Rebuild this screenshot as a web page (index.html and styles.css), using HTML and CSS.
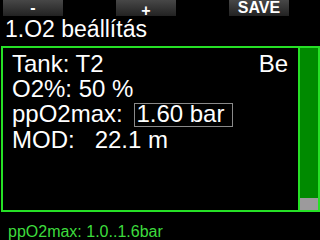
FILE: index.html
```html
<!DOCTYPE html>
<html>
<head>
<meta charset="utf-8">
<link rel="stylesheet" href="styles.css">
</head>
<body>
<div class="screen">
  <div class="topbar">
    <div class="btn">-</div>
    <div class="btn plus">+</div>
    <div class="btn">SAVE</div>
  </div>
  <div class="title">1.O2 beállítás</div>
  <div class="frame">
    <div class="panel">
      <div class="row split"><span>Tank: T2</span><span>Be</span></div>
      <div class="row">O2%: 50 %</div>
      <div class="row">ppO2max: <span class="field">1.60 bar</span></div>
      <div class="row">MOD:   22.1 m</div>
    </div>
    <div class="scroll">
      <div class="track"></div>
      <div class="thumb"></div>
    </div>
  </div>
  <div class="hint">ppO2max: 1.0..1.6bar</div>
</div>
</body>
</html>
```
FILE: styles.css
```css
html, body {
  margin: 0;
  padding: 0;
  background: #000;
}
.screen {
  width: 320px;
  height: 240px;
  overflow: hidden;
  background: #000;
  color: #fff;
  font-family: "Liberation Sans", Arial, sans-serif;
}
.topbar {
  display: flex;
  gap: 53px;
  padding-left: 3px;
  height: 16px;
}
.btn {
  width: 60px;
  height: 16px;
  box-sizing: border-box;
  background: linear-gradient(#474747, #222222);
  color: #fff;
  font-weight: bold;
  font-size: 16px;
  line-height: 16px;
  text-align: center;
}
.btn.plus {
  padding-top: 6px;
  line-height: 10px;
}
.title {
  height: 30px;
  box-sizing: border-box;
  padding: 1px 0 0 5px;
  font-size: 23px;
  line-height: 24px;
}
.frame {
  display: flex;
  margin-left: 1px;
  width: 319px;
  height: 166px;
  box-sizing: border-box;
  border: 2px solid #26e026;
}
.panel {
  flex: 1;
  border-right: 2px solid #26e026;
  padding: 3px 10px 0 9px;
  font-size: 24px;
  line-height: 25px;
}
.row {
  white-space: pre;
}
.split {
  display: flex;
  justify-content: space-between;
}
.field {
  display: inline-block;
  margin-left: 5px;
  border: 1px solid #8a8a8a;
  padding: 0 8px 2px 1px;
  line-height: 20px;
}
.scroll {
  width: 18px;
  display: flex;
  flex-direction: column;
}
.track {
  flex: 1;
  background: #008a00;
}
.thumb {
  height: 12px;
  background: #9c9a9c;
}
.hint {
  padding: 10px 0 0 8px;
  color: #3ddc3d;
  font-size: 16px;
  line-height: 20px;
}
```
